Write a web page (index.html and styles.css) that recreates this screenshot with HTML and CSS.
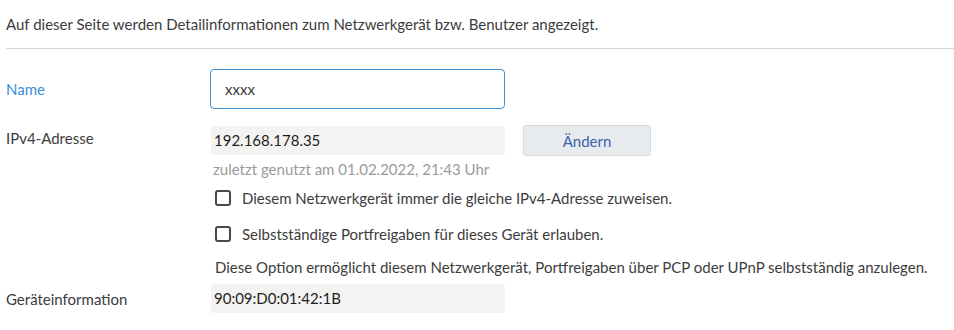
FILE: index.html
```html
<!DOCTYPE html>
<html lang="de">
<head>
  <meta charset="UTF-8" />
  <title>Netzwerkgerät</title>
  <link rel="stylesheet" href="styles.css">
</head>
<body>
  <p class="intro">Auf dieser Seite werden Detailinformationen zum Netzwerkgerät bzw. Benutzer angezeigt.</p>
  <hr class="sep">

  <div class="row row-name">
    <label class="label active" for="name">Name</label>
    <div class="field">
      <input class="input" id="name" type="text" value="xxxx">
    </div>
  </div>

  <div class="row row-ip">
    <div class="label">IPv4-Adresse</div>
    <div class="field">
      <div class="line">
        <div class="box">192.168.178.35</div>
        <button class="btn" type="button">Ändern</button>
      </div>
      <div class="hint">zuletzt genutzt am 01.02.2022, 21:43 Uhr</div>
      <label class="check"><span class="cb"></span>Diesem Netzwerkgerät immer die gleiche IPv4-Adresse zuweisen.</label>
      <label class="check"><span class="cb"></span>Selbstständige Portfreigaben für dieses Gerät erlauben.</label>
      <div class="note">Diese Option ermöglicht diesem Netzwerkgerät, Portfreigaben über PCP oder UPnP selbstständig anzulegen.</div>
    </div>
  </div>

  <div class="row row-info">
    <div class="label">Geräteinformation</div>
    <div class="field">
      <div class="box">90:09:D0:01:42:1B</div>
    </div>
  </div>
</body>
</html>
```

FILE: styles.css
```css
body {
  margin: 0;
  font-family: Lato, "Open Sans", sans-serif;
  font-size: 15px;
  color: #3c3c3c;
  background: #fff;
}
.intro {
  margin: 0;
  padding: 13px 0 0 6px;
  height: 22px;
  line-height: 22px;
}
.sep {
  margin: 13px 0 0 6px;
  border: none;
  border-top: 1px solid #d6d6d6;
  height: 0;
}
.row {
  display: flex;
  padding-left: 6px;
}
.label {
  width: 204px;
  flex: none;
  line-height: 20px;
}
.label.active {
  color: #3d8fd6;
}
.row-name {
  margin-top: 20px;
  align-items: center;
}
.input {
  box-sizing: border-box;
  width: 295px;
  height: 40px;
  border: 1px solid #3d8fd6;
  border-radius: 4px;
  padding: 0 14px;
  font: inherit;
  color: #3c3c3c;
  outline: none;
}
.row-ip {
  margin-top: 16px;
}
.row-ip .label {
  margin-top: 3px;
}
.line {
  display: flex;
  align-items: center;
  gap: 18px;
}
.box {
  box-sizing: border-box;
  width: 294px;
  height: 29px;
  line-height: 29px;
  padding: 0 3px;
  margin-left: 1px;
  background: #f4f3f1;
  border-radius: 3px;
  color: #1e1e1e;
}
.btn {
  box-sizing: border-box;
  width: 128px;
  height: 31px;
  background: #e8ebee;
  border: 1px solid #d6dbe1;
  border-radius: 3px;
  font: inherit;
  color: #3b62a8;
}
.hint {
  color: #9a9a9a;
  margin: 3px 0 0 3px;
  line-height: 20px;
}
.check {
  display: flex;
  align-items: center;
  gap: 11px;
  margin: 7px 0 0 5px;
  line-height: 24px;
}
.check + .check {
  margin-top: 12px;
}
.cb {
  box-sizing: border-box;
  width: 16px;
  height: 16px;
  border: 2px solid #484848;
  border-radius: 3px;
}
.note {
  margin: 9px 0 0 5px;
  line-height: 24px;
}
.row-info {
  margin-top: 5px;
  align-items: center;
}
```
